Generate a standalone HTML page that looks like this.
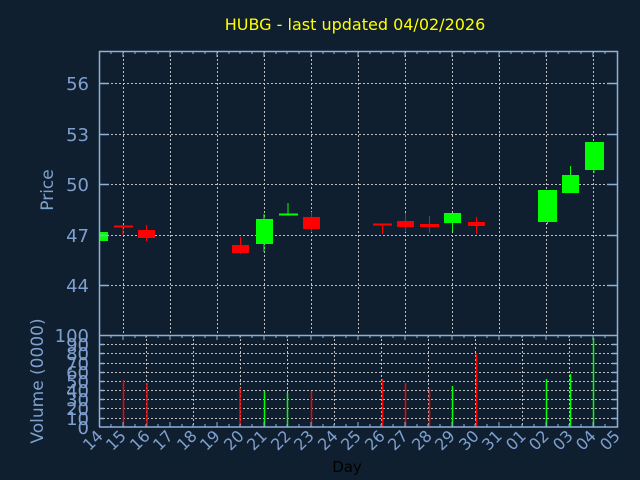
<!DOCTYPE html>
<html><head><style>
html,body{margin:0;padding:0;background:#0f1f2f;}
svg{display:block;font-family:"DejaVu Sans","Liberation Sans",sans-serif;}
</style></head><body>
<svg width="640" height="480" viewBox="0 0 640 480">
<rect width="640" height="480" fill="#0f1f2f"/>
<text x="355" y="30" fill="#ffff00" font-size="16" text-anchor="middle">HUBG - last updated 04/02/2026</text>
<g stroke="#c0c0c0" stroke-width="1" stroke-dasharray="2,2">
<line x1="99" y1="83.5" x2="617" y2="83.5"/>
<line x1="99" y1="134.5" x2="617" y2="134.5"/>
<line x1="99" y1="184.5" x2="617" y2="184.5"/>
<line x1="99" y1="235.5" x2="617" y2="235.5"/>
<line x1="99" y1="285.5" x2="617" y2="285.5"/>
<line x1="123.5" y1="51" x2="123.5" y2="335"/>
<line x1="170.5" y1="51" x2="170.5" y2="335"/>
<line x1="217.5" y1="51" x2="217.5" y2="335"/>
<line x1="264.5" y1="51" x2="264.5" y2="335"/>
<line x1="311.5" y1="51" x2="311.5" y2="335"/>
<line x1="358.5" y1="51" x2="358.5" y2="335"/>
<line x1="405.5" y1="51" x2="405.5" y2="335"/>
<line x1="452.5" y1="51" x2="452.5" y2="335"/>
<line x1="499.5" y1="51" x2="499.5" y2="335"/>
<line x1="546.5" y1="51" x2="546.5" y2="335"/>
<line x1="593.5" y1="51" x2="593.5" y2="335"/>
</g>
<g fill="#7fa0cf" font-size="18" text-anchor="end">
<text x="89" y="90">56</text><text x="89" y="141">53</text><text x="89" y="191">50</text><text x="89" y="242">47</text><text x="89" y="292">44</text>
</g>
<text transform="translate(53,190) rotate(-90)" fill="#7fa0cf" font-size="17" text-anchor="middle">Price</text>
<text transform="translate(43,381) rotate(-90)" fill="#7fa0cf" font-size="17" text-anchor="middle">Volume (0000)</text>
<text x="347" y="472" fill="#000000" font-size="15" text-anchor="middle">Day</text>
<g>
<rect x="99" y="232" width="9" height="9" fill="#00ff00"/>
<line x1="114" y1="226.5" x2="133" y2="226.5" stroke="#ff0000" stroke-width="2"/><line x1="123" y1="225" x2="123" y2="235" stroke="#ff0000"/>
<line x1="146.5" y1="225" x2="146.5" y2="241" stroke="#ff0000"/><rect x="138" y="230" width="17" height="8" fill="#ff0000"/>
<line x1="240.5" y1="237" x2="240.5" y2="254" stroke="#ff0000"/><rect x="232" y="245" width="17" height="8" fill="#ff0000"/>
<line x1="264" y1="214" x2="264" y2="252" stroke="#00ff00"/><rect x="256" y="219" width="17" height="25" fill="#00ff00"/>
<line x1="279" y1="214.5" x2="298" y2="214.5" stroke="#00ff00" stroke-width="2"/><line x1="288" y1="203" x2="288" y2="215" stroke="#00ff00"/>
<line x1="311.5" y1="212" x2="311.5" y2="232" stroke="#ff0000"/><rect x="303" y="217" width="17" height="12" fill="#ff0000"/>
<line x1="373" y1="224.5" x2="392" y2="224.5" stroke="#ff0000" stroke-width="2"/><line x1="382.5" y1="224" x2="382.5" y2="234" stroke="#ff0000"/>
<line x1="405.5" y1="213" x2="405.5" y2="232" stroke="#ff0000"/><rect x="397" y="221" width="17" height="6" fill="#ff0000"/>
<line x1="429.5" y1="216" x2="429.5" y2="233" stroke="#ff0000"/><rect x="420" y="224" width="19" height="3" fill="#ff0000"/>
<line x1="452.5" y1="213" x2="452.5" y2="231" stroke="#00ff00"/><rect x="444" y="213" width="17" height="10" fill="#00ff00"/>
<line x1="476.5" y1="217" x2="476.5" y2="234" stroke="#ff0000"/><rect x="468" y="222" width="17" height="4" fill="#ff0000"/>
<line x1="547.5" y1="190" x2="547.5" y2="224" stroke="#00ff00"/><rect x="538" y="190" width="19" height="32" fill="#00ff00"/>
<line x1="570.5" y1="166" x2="570.5" y2="193" stroke="#00ff00"/><rect x="562" y="175" width="17" height="18" fill="#00ff00"/>
<line x1="594" y1="142" x2="594" y2="173" stroke="#00ff00"/><rect x="585" y="142" width="19" height="28" fill="#00ff00"/>
</g>
<g stroke="#c0c0c0" stroke-width="1" stroke-dasharray="2,2">
<line x1="99" y1="344.5" x2="617" y2="344.5"/><line x1="99" y1="353.5" x2="617" y2="353.5"/><line x1="99" y1="363.5" x2="617" y2="363.5"/><line x1="99" y1="372.5" x2="617" y2="372.5"/><line x1="99" y1="381.5" x2="617" y2="381.5"/><line x1="99" y1="390.5" x2="617" y2="390.5"/><line x1="99" y1="399.5" x2="617" y2="399.5"/><line x1="99" y1="408.5" x2="617" y2="408.5"/><line x1="99" y1="418.5" x2="617" y2="418.5"/>
<line x1="146.5" y1="335" x2="146.5" y2="427"/><line x1="193.5" y1="335" x2="193.5" y2="427"/><line x1="240.5" y1="335" x2="240.5" y2="427"/><line x1="287.5" y1="335" x2="287.5" y2="427"/><line x1="334.5" y1="335" x2="334.5" y2="427"/><line x1="381.5" y1="335" x2="381.5" y2="427"/><line x1="428.5" y1="335" x2="428.5" y2="427"/><line x1="475.5" y1="335" x2="475.5" y2="427"/><line x1="522.5" y1="335" x2="522.5" y2="427"/><line x1="569.5" y1="335" x2="569.5" y2="427"/>
</g>
<g stroke-width="1.5">
<line x1="123.5" y1="380" x2="123.5" y2="427" stroke="#ff0000"/>
<line x1="147" y1="383" x2="147" y2="427" stroke="#ff0000"/>
<line x1="240" y1="388" x2="240" y2="427" stroke="#ff0000"/>
<line x1="264.5" y1="391" x2="264.5" y2="427" stroke="#00ff00"/>
<line x1="287.5" y1="393" x2="287.5" y2="427" stroke="#00ff00"/>
<line x1="311.5" y1="391" x2="311.5" y2="427" stroke="#ff0000"/>
<line x1="382.5" y1="379" x2="382.5" y2="427" stroke="#ff0000"/>
<line x1="405.5" y1="383" x2="405.5" y2="427" stroke="#ff0000"/>
<line x1="429.5" y1="389" x2="429.5" y2="427" stroke="#ff0000"/>
<line x1="452.5" y1="386" x2="452.5" y2="427" stroke="#00ff00"/>
<line x1="476.5" y1="353" x2="476.5" y2="427" stroke="#ff0000"/>
<line x1="546.5" y1="379" x2="546.5" y2="427" stroke="#00ff00"/>
<line x1="570.5" y1="374" x2="570.5" y2="427" stroke="#00ff00"/>
<line x1="593.5" y1="338" x2="593.5" y2="427" stroke="#00ff00"/>
</g>
<g stroke="#8fb0d8" stroke-width="1.5" fill="none">
<path d="M99.5 427V51.5H617.5V427H99"/>
<line x1="99" y1="335.5" x2="617" y2="335.5"/>
<path d="M99 83.5h10M99 134.5h10M99 184.5h10M99 235.5h10M99 285.5h10M607 83.5h10M607 134.5h10M607 184.5h10M607 235.5h10M607 285.5h10"/>
<path d="M99 344.5h5M99 353.5h5M99 363.5h5M99 372.5h5M99 381.5h5M99 390.5h5M99 399.5h5M99 408.5h5M99 418.5h5M612 344.5h5M612 353.5h5M612 363.5h5M612 372.5h5M612 381.5h5M612 390.5h5M612 399.5h5M612 408.5h5M612 418.5h5"/>
</g>
<g stroke="#8fb0d8" stroke-width="1">
<path d="M111 51v3M123 51v6M135 51v3M146 51v3M158 51v3M170 51v6M182 51v3M193 51v3M205 51v3M217 51v6M229 51v3M240 51v3M252 51v3M264 51v6M276 51v3M287 51v3M299 51v3M311 51v6M323 51v3M334 51v3M346 51v3M358 51v6M370 51v3M381 51v3M393 51v3M405 51v6M417 51v3M428 51v3M440 51v3M452 51v6M464 51v3M475 51v3M487 51v3M499 51v6M511 51v3M522 51v3M534 51v3M546 51v6M558 51v3M569 51v3M581 51v3M593 51v6M605 51v3"/>
<path d="M111 335v3M123 335v5M135 335v3M146 335v3M158 335v3M170 335v5M182 335v3M193 335v3M205 335v3M217 335v5M229 335v3M240 335v3M252 335v3M264 335v5M276 335v3M287 335v3M299 335v3M311 335v5M323 335v3M334 335v3M346 335v3M358 335v5M370 335v3M381 335v3M393 335v3M405 335v5M417 335v3M428 335v3M440 335v3M452 335v5M464 335v3M475 335v3M487 335v3M499 335v5M511 335v3M522 335v3M534 335v3M546 335v5M558 335v3M569 335v3M581 335v3M593 335v5M605 335v3"/>
<path d="M111 427v-3M123 427v-5M135 427v-3M146 427v-3M158 427v-3M170 427v-5M182 427v-3M193 427v-3M205 427v-3M217 427v-5M229 427v-3M240 427v-3M252 427v-3M264 427v-5M276 427v-3M287 427v-3M299 427v-3M311 427v-5M323 427v-3M334 427v-3M346 427v-3M358 427v-5M370 427v-3M381 427v-3M393 427v-3M405 427v-5M417 427v-3M428 427v-3M440 427v-3M452 427v-5M464 427v-3M475 427v-3M487 427v-3M499 427v-5M511 427v-3M522 427v-3M534 427v-3M546 427v-5M558 427v-3M569 427v-3M581 427v-3M593 427v-5M605 427v-3"/>
</g>
<g fill="#7fa0cf" font-size="18" text-anchor="end">
<text x="89" y="342">100</text><text x="89" y="351">90</text><text x="89" y="360">80</text><text x="89" y="370">70</text><text x="89" y="379">60</text><text x="89" y="388">50</text><text x="89" y="397">40</text><text x="89" y="406">30</text><text x="89" y="415">20</text><text x="89" y="425">10</text><text x="89" y="434">0</text>
</g>
<g fill="#7fa0cf" font-size="16" text-anchor="end">
<text transform="translate(104,437) rotate(-45)">14</text>
<text transform="translate(127,437) rotate(-45)">15</text>
<text transform="translate(151,437) rotate(-45)">16</text>
<text transform="translate(174,437) rotate(-45)">17</text>
<text transform="translate(198,437) rotate(-45)">18</text>
<text transform="translate(221,437) rotate(-45)">19</text>
<text transform="translate(245,437) rotate(-45)">20</text>
<text transform="translate(268,437) rotate(-45)">21</text>
<text transform="translate(292,437) rotate(-45)">22</text>
<text transform="translate(315,437) rotate(-45)">23</text>
<text transform="translate(339,437) rotate(-45)">24</text>
<text transform="translate(362,437) rotate(-45)">25</text>
<text transform="translate(386,437) rotate(-45)">26</text>
<text transform="translate(409,437) rotate(-45)">27</text>
<text transform="translate(433,437) rotate(-45)">28</text>
<text transform="translate(456,437) rotate(-45)">29</text>
<text transform="translate(480,437) rotate(-45)">30</text>
<text transform="translate(503,437) rotate(-45)">31</text>
<text transform="translate(527,437) rotate(-45)">01</text>
<text transform="translate(550,437) rotate(-45)">02</text>
<text transform="translate(574,437) rotate(-45)">03</text>
<text transform="translate(597,437) rotate(-45)">04</text>
<text transform="translate(621,437) rotate(-45)">05</text>
</g>
</svg>
</body></html>
